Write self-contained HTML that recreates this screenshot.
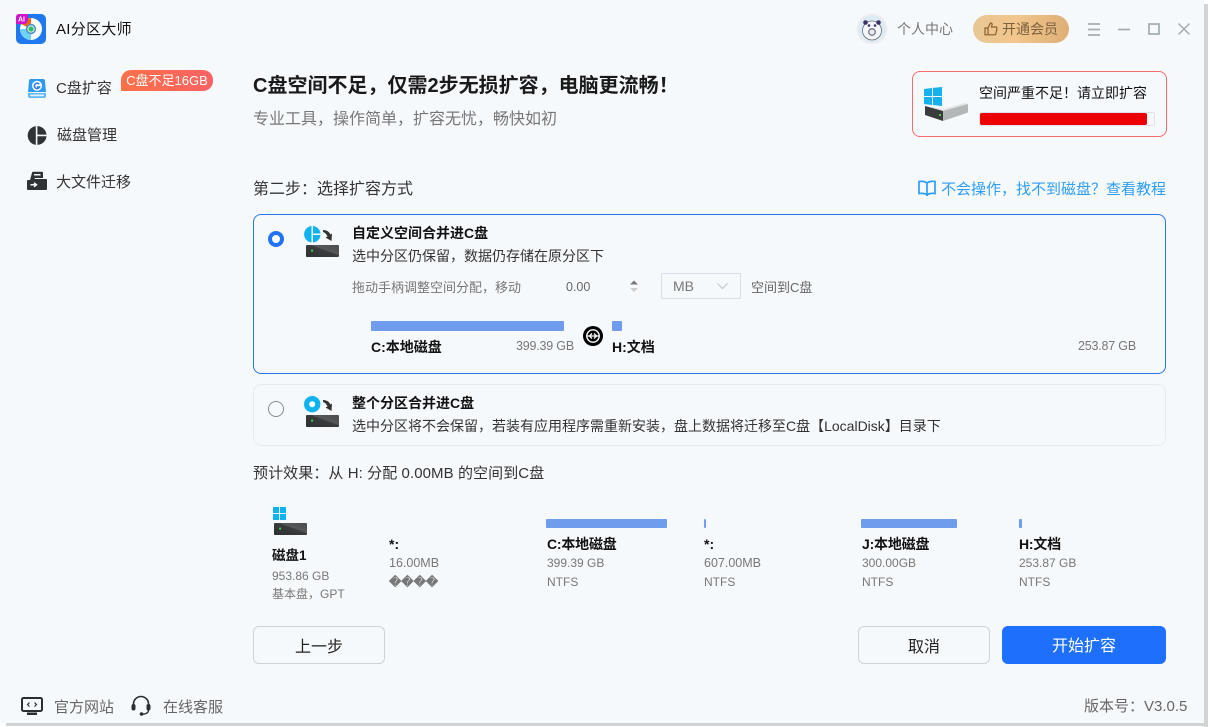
<!DOCTYPE html>
<html lang="zh"><head><meta charset="utf-8"><title>AI分区大师</title>
<style>
*{box-sizing:border-box;margin:0;padding:0}
html,body{width:1211px;height:727px;overflow:hidden;background:#fff}
body{position:relative;font-family:"Liberation Sans","Noto Sans CJK SC",sans-serif;color:#222}
#w{position:absolute;left:0;top:0;width:1204px;height:723px;background:#f6f9fb}
#sr{position:absolute;left:1204px;top:4px;width:4px;height:723px;background:#d2d4d4}
#sb{position:absolute;left:6px;top:723px;width:1202px;height:3px;background:#d2d4d4}
.t{position:absolute;white-space:nowrap;line-height:20px}
.b{font-weight:700;color:#111}
.g{color:#777}
svg{position:absolute;overflow:visible}
.bar{position:absolute;background:#6f9cec;border-radius:1px}
.btn{position:absolute;text-align:center;border-radius:6px;font-size:16px}
</style></head><body>
<div id="sr"></div><div id="sb"></div>
<div id="w">
<svg width="0" height="0" style="left:0;top:0"><defs>
<linearGradient id="dk" x1="0" y1="1" x2="1" y2="0"><stop offset="0" stop-color="#2c2e2f"/><stop offset=".55" stop-color="#3a3c3d"/><stop offset=".6" stop-color="#565859"/><stop offset="1" stop-color="#4a4c4d"/></linearGradient>
</defs></svg>
<!-- logo -->
<svg style="left:16px;top:14px" width="30" height="30" viewBox="0 0 30 30">
<rect width="30" height="30" rx="5" fill="#1f78ee"/>
<circle cx="15" cy="15" r="11" fill="#fff"/>
<path d="M15 15V4A11 11 0 0 0 5 10z" fill="#f2690d"/>
<path d="M15 15H4A11 11 0 0 0 15 26z" fill="#6fd3f6"/>
<circle cx="15" cy="15" r="5.200" fill="#4f8fc9"/><circle cx="15" cy="15" r="3.600" fill="#e9f5f2"/><circle cx="15" cy="15" r="2.600" fill="#2fbf63"/>
<path d="M0 10V3a3 3 0 0 1 3-3h9v6a4 4 0 0 1-4 4z" fill="#d014c8"/>
<text x="2" y="7.500" font-size="7" font-weight="700" fill="#fff" font-family="Liberation Sans">AI</text>
</svg>
<div class="t" style="left:56px;top:20px;font-size:15px;color:#111;letter-spacing:.3px">AI分区大师</div>

<!-- sidebar -->
<svg style="left:27px;top:79px" width="20" height="19" viewBox="0 0 20 19">
<path d="M4 0h12a2 2 0 0 1 2 2l1 11H1L2 2a2 2 0 0 1 2-2z" fill="#2f9bf0"/><path d="M1 14h18v3a2 2 0 0 1-2 2H3a2 2 0 0 1-2-2z" fill="#5fb8f5"/><rect x="3" y="15.500" width="14" height="1.800" rx=".8" fill="#e3f3fe"/>
<circle cx="10" cy="6.800" r="5" fill="#fff"/><path d="M12.200 5.200A2.700 2.700 0 1 0 12.500 8H10" fill="none" stroke="#2f7fe0" stroke-width="1.600"/>
</svg>
<div class="t" style="left:56px;top:79px;font-size:15px;color:#333">C盘扩容</div>
<div style="position:absolute;left:121px;top:70px;width:92px;height:21px;border-radius:10px 10px 10px 0;background:linear-gradient(90deg,#fb7148,#fb6263);color:#fff;font-size:13px;line-height:22px;text-align:center;white-space:nowrap">C盘不足16GB</div>
<svg style="left:27px;top:126px" width="20" height="19" viewBox="0 0 20 19">
<path d="M8.800 0.100V18.900A9.500 9.500 0 0 1 8.800 0.100z" fill="#2f3336"/><path d="M10.400 0.100A9.500 9.500 0 0 1 19.500 8.600H10.400z" fill="#2f3336"/><path d="M10.400 10.200H19.500A9.500 9.500 0 0 1 10.400 18.900z" fill="#2f3336"/>
</svg>
<div class="t" style="left:57px;top:126px;font-size:15px;color:#333">磁盘管理</div>
<svg style="left:27px;top:172px" width="20" height="18" viewBox="0 0 20 18">
<path d="M5 0.800a1 1 0 0 1 1-1h9a1 1 0 0 1 1 1V6H8L7 8H3z" fill="#2f3336"/><rect x="7" y="2" width="6.500" height="1.500" fill="#f6f9fb"/>
<path d="M1 8h5l1-1h12a1 1 0 0 1 1 1v9a1 1 0 0 1-1 1H1a1 1 0 0 1-1-1V9a1 1 0 0 1 1-1z" fill="#2f3336"/>
<path d="M3.500 12.800h5.500M7 10.800l2.500 2-2.500 2" stroke="#f6f9fb" stroke-width="1.500" fill="none"/>
</svg>
<div class="t" style="left:56px;top:173px;font-size:15px;color:#333">大文件迁移</div>

<!-- footer left -->
<svg style="left:21px;top:697px" width="23" height="19" viewBox="0 0 23 19">
<rect x="1" y="1" width="20" height="13" rx="1.500" fill="none" stroke="#2a2e31" stroke-width="2"/>
<path d="M6 18h10v-2.500H6z" fill="#2a2e31"/>
<path d="M8.500 5.500L6.500 7.500l2 2M13.500 5.500l2 2-2 2" stroke="#2a2e31" stroke-width="1.200" fill="none"/>
</svg>
<div class="t" style="left:54px;top:698px;font-size:15px;color:#666">官方网站</div>
<svg style="left:131px;top:696px" width="20" height="20" viewBox="0 0 20 20">
<path d="M2.500 10V8a7.500 7.500 0 0 1 15 0v2" fill="none" stroke="#2a2e31" stroke-width="1.600"/>
<rect x="0.500" y="8" width="4" height="6.500" rx="2" fill="#2a2e31"/><rect x="15.500" y="8" width="4" height="6.500" rx="2" fill="#2a2e31"/>
<path d="M17.500 14c0 3-2.500 4-6 4.200" fill="none" stroke="#2a2e31" stroke-width="1.300"/><circle cx="10.500" cy="18" r="1.800" fill="#2a2e31"/>
</svg>
<div class="t" style="left:163px;top:698px;font-size:15px;color:#666">在线客服</div>

<!-- top right -->
<svg style="left:856px;top:13px" width="32" height="32" viewBox="0 0 32 32">
<circle cx="16" cy="16" r="15.500" fill="#f5ecf3"/><circle cx="16" cy="16" r="14" fill="#dcecf3"/>
<circle cx="16" cy="17.500" r="9.500" fill="#f4f8fa" stroke="#6a6a78" stroke-width=".8"/>
<circle cx="9.500" cy="9.500" r="2.300" fill="#3c2f6c"/><circle cx="22.500" cy="9.500" r="2.300" fill="#3c2f6c"/>
<circle cx="13" cy="12.500" r="1.300" fill="#3c2f6c"/><circle cx="19" cy="12.500" r="1.300" fill="#3c2f6c"/>
<circle cx="16" cy="19" r="3.300" fill="#e9e8ef" stroke="#77778a" stroke-width="1.300"/>
</svg>
<div class="t" style="left:897px;top:19px;font-size:14px;color:#777">个人中心</div>
<div style="position:absolute;left:973px;top:15px;width:96px;height:28px;border-radius:14px;background:linear-gradient(90deg,#e8c795,#f2c68c 45%,#deae76)"></div>
<svg style="left:984px;top:22px" width="14" height="14" viewBox="0 0 14 14"><path d="M4 6L6.500 1c1.500 0 2 1 1.500 2L7.500 5H12a1 1 0 0 1 1 1.200L11.800 12a1 1 0 0 1-1 .8H4zM1 6h3v6.800H1z" fill="none" stroke="#8a5f2c" stroke-width="1.200"/></svg>
<div class="t" style="left:1002px;top:19px;font-size:14px;color:#7a6140">开通会员</div>
<svg style="left:1088px;top:23px" width="13" height="13" viewBox="0 0 13 13"><path d="M0 1h12M0 6.500h12M0 12h12" stroke="#a4acb0" stroke-width="1.700"/></svg>
<svg style="left:1118px;top:28px" width="13" height="3" viewBox="0 0 13 3"><path d="M0 1.500h12" stroke="#a4acb0" stroke-width="1.700"/></svg>
<svg style="left:1148px;top:23px" width="12" height="12" viewBox="0 0 12 12"><rect x="1" y="1" width="10" height="10" fill="none" stroke="#a4acb0" stroke-width="1.700"/></svg>
<svg style="left:1178px;top:23px" width="12" height="12" viewBox="0 0 12 12"><path d="M.5.500l11 11M11.500.500l-11 11" stroke="#a4acb0" stroke-width="1.500"/></svg>

<!-- headline -->
<div class="t b" style="left:253px;top:74px;font-size:20px;line-height:24px;color:#1a1a1a">C盘空间不足，仅需2步无损扩容，电脑更流畅！</div>
<div class="t" style="left:253px;top:110px;font-size:16px;color:#777">专业工具，操作简单，扩容无忧，畅快如初</div>

<!-- warn box -->
<div style="position:absolute;left:912px;top:71px;width:255px;height:66px;border:1px solid #f56a6a;border-radius:8px"></div>
<svg style="left:923px;top:87px" width="46" height="35" viewBox="0 0 46 35">
<path d="M1 2l8-1v8H1zM10 .9L19 0v9h-9zM1 10h8v8l-8-1zM10 10h9v9l-9-1z" fill="#13b2ee"/>
<path d="M2 19l18 5 25-7-3-1-22 6z" fill="#e3e4e4"/>
<path d="M20 24l25-7v8.500L20 34z" fill="#b4b7b8"/><path d="M2 19l18 5v10L2 28z" fill="#3a3c3c"/>
<rect x="16" y="27" width="2" height="2" fill="#3ccf4a"/>
</svg>
<div class="t" style="left:979px;top:83px;font-size:14px;color:#111">空间严重不足！请立即扩容</div>
<div style="position:absolute;left:979px;top:112px;width:176px;height:14px;border:1px solid #dde2ea;border-radius:2px;background:#f6f9fb"></div>
<div style="position:absolute;left:980px;top:113px;width:167px;height:12px;background:#ec0000;border-radius:2px"></div>

<!-- step -->
<div class="t" style="left:253px;top:180px;font-size:16px;color:#333">第二步：选择扩容方式</div>
<svg style="left:918px;top:180px" width="18" height="17" viewBox="0 0 18 17"><path d="M9 3C7.500 1.500 4 1 1 1.500V13.500c3-.5 6.500 0 8 1.500 1.500-1.500 5-2 8-1.500V1.500C14 1 10.500 1.500 9 3zM9 3v13" fill="none" stroke="#2e9df5" stroke-width="1.700"/></svg>
<div class="t" style="left:941px;top:180px;font-size:15px;color:#2e9df5">不会操作，找不到磁盘？查看教程</div>

<!-- card 1 -->
<div style="position:absolute;left:253px;top:214px;width:913px;height:160px;border:1px solid #2b74e8;border-radius:8px"></div>
<div style="position:absolute;left:268px;top:231px;width:16px;height:16px;border-radius:50%;border:4.500px solid #2173f5;background:#fff"></div>
<svg style="left:304px;top:226px" width="36" height="32" viewBox="0 0 36 32">
<path d="M7.500 0V16.500A8.300 8.300 0 0 1 7.500 0zM9 0A8.300 8.300 0 0 1 16.500 7.500H9zM9 9H16.500A8.300 8.300 0 0 1 9 16.500z" fill="#10b3ef"/>
<path d="M19 4c4 .3 6 1.500 7.500 4.500L28 7.500 27.500 15 21.500 11.500 23.500 10.500C22.500 8 21 6.500 19 6z" fill="#333"/>
<rect x="2" y="19" width="33" height="12" rx="1" fill="url(#dk)"/><rect x="7" y="23.500" width="2.200" height="2.200" rx="1" fill="#3ccf4a"/>
</svg>
<div class="t b" style="left:352px;top:223px;font-size:14px">自定义空间合并进C盘</div>
<div class="t" style="left:352px;top:246px;font-size:14px;color:#333">选中分区仍保留，数据仍存储在原分区下</div>
<div class="t g" style="left:352px;top:278px;font-size:13px">拖动手柄调整空间分配，移动</div>
<div class="t" style="left:566px;top:277px;font-size:12.500px;color:#666">0.00</div>
<svg style="left:629px;top:279px" width="10" height="14" viewBox="0 0 10 14"><path d="M1 5.500l4-4 4 4z" fill="#777"/><path d="M1 9l4 4 4-4z" fill="#ccc"/></svg>
<div style="position:absolute;left:661px;top:273px;width:80px;height:26px;border:1px solid #d8dee8;border-radius:2px"></div>
<div class="t" style="left:673px;top:276px;font-size:14px;color:#777">MB</div>
<svg style="left:717px;top:283px" width="11" height="7" viewBox="0 0 11 7"><path d="M.5.500l5 5 5-5" fill="none" stroke="#c5c9ce" stroke-width="1.200"/></svg>
<div class="t" style="left:751px;top:278px;font-size:13px;color:#666">空间到C盘</div>
<div class="bar" style="left:371px;top:321px;width:193px;height:10px"></div>
<div class="bar" style="left:612px;top:321px;width:10px;height:10px"></div>
<div class="t b" style="left:371px;top:337px;font-size:14px">C:本地磁盘</div>
<div class="t g" style="left:516px;top:336px;font-size:12.500px;letter-spacing:-.2px">399.39 GB</div>
<svg style="left:583px;top:326px" width="20" height="20" viewBox="0 0 20 20"><circle cx="10" cy="10" r="10" fill="#000"/><circle cx="10" cy="10" r="6.200" fill="none" stroke="#fff" stroke-width="1.400"/><path d="M4.500 10h11M6.500 10l2.500-2.500M6.500 10L9 12.500M13.500 10L11 7.500M13.500 10L11 12.500" fill="none" stroke="#fff" stroke-width="1.300"/></svg>
<div class="t b" style="left:612px;top:337px;font-size:14px">H:文档</div>
<div class="t g" style="left:1078px;top:336px;font-size:12.500px;letter-spacing:-.2px">253.87 GB</div>

<!-- card 2 -->
<div style="position:absolute;left:253px;top:384px;width:913px;height:62px;border:1px solid #e3edf1;border-radius:8px"></div>
<div style="position:absolute;left:268px;top:401px;width:16px;height:16px;border-radius:50%;border:1px solid #8a8a8a"></div>
<svg style="left:304px;top:396px" width="36" height="32" viewBox="0 0 36 32">
<circle cx="8.200" cy="8.200" r="8.200" fill="#10b3ef"/><circle cx="8.200" cy="8.200" r="3" fill="#fff"/>
<path d="M19 4c4 .3 6 1.500 7.500 4.500L28 7.500 27.500 15 21.500 11.500 23.500 10.500C22.500 8 21 6.500 19 6z" fill="#333"/>
<rect x="2" y="19" width="33" height="12" rx="1" fill="url(#dk)"/><rect x="7" y="23.500" width="2.200" height="2.200" rx="1" fill="#3ccf4a"/>
</svg>
<div class="t b" style="left:352px;top:393px;font-size:14px">整个分区合并进C盘</div>
<div class="t" style="left:352px;top:416px;font-size:14px;color:#333">选中分区将不会保留，若装有应用程序需重新安装，盘上数据将迁移至C盘【LocalDisk】目录下</div>

<!-- preview -->
<div class="t" style="left:253px;top:464px;font-size:15px;color:#333;letter-spacing:.08px">预计效果：从 H: 分配 0.00MB 的空间到C盘</div>
<svg style="left:273px;top:507px" width="36" height="30" viewBox="0 0 36 30">
<path d="M0 0h6v6H0zM7 0h6v6H7zM0 7h6v6H0zM7 7h6v6H7z" fill="#10b3ef"/>
<rect x="1" y="16" width="33" height="12" rx="1" fill="url(#dk)"/><rect x="6" y="20.500" width="2.200" height="2.200" rx="1" fill="#3ccf4a"/>
</svg>
<div class="t b" style="left:272px;top:546px;font-size:13.500px">磁盘1</div>
<div class="t g" style="left:272px;top:566px;font-size:12px">953.86 GB</div>
<div class="t g" style="left:272px;top:584px;font-size:12px">基本盘，GPT</div>

<div class="t b" style="left:389px;top:534px;font-size:14px">*:</div>
<div class="t g" style="left:389px;top:553px;font-size:12.500px">16.00MB</div>
<div class="t g" style="left:389px;top:572px;font-size:12px;font-weight:700">����</div>

<div class="bar" style="left:546px;top:519px;width:121px;height:9px"></div>
<div class="t b" style="left:547px;top:534px;font-size:14px;letter-spacing:-.2px">C:本地磁盘</div>
<div class="t g" style="left:547px;top:553px;font-size:12px">399.39 GB</div>
<div class="t g" style="left:547px;top:572px;font-size:12px">NTFS</div>

<div class="bar" style="left:704px;top:519px;width:2px;height:9px"></div>
<div class="t b" style="left:704px;top:534px;font-size:14px">*:</div>
<div class="t g" style="left:704px;top:553px;font-size:12.500px">607.00MB</div>
<div class="t g" style="left:704px;top:572px;font-size:12px">NTFS</div>

<div class="bar" style="left:861px;top:519px;width:96px;height:9px"></div>
<div class="t b" style="left:862px;top:534px;font-size:14px;letter-spacing:-.2px">J:本地磁盘</div>
<div class="t g" style="left:862px;top:553px;font-size:12px">300.00GB</div>
<div class="t g" style="left:862px;top:572px;font-size:12px">NTFS</div>

<div class="bar" style="left:1019px;top:519px;width:3px;height:9px"></div>
<div class="t b" style="left:1019px;top:534px;font-size:14px;letter-spacing:-.2px">H:文档</div>
<div class="t g" style="left:1019px;top:553px;font-size:12px">253.87 GB</div>
<div class="t g" style="left:1019px;top:572px;font-size:12px">NTFS</div>

<!-- buttons -->
<div class="btn" style="left:253px;top:626px;width:132px;height:38px;line-height:41px;border:1px solid #cfd3d6;color:#222">上一步</div>
<div class="btn" style="left:858px;top:626px;width:132px;height:38px;line-height:41px;border:1px solid #cfd3d6;color:#222">取消</div>
<div class="btn" style="left:1002px;top:626px;width:164px;height:38px;line-height:42px;background:#1e6ffb;color:#fff">开始扩容</div>
<div class="t" style="left:1084px;top:697px;font-size:15px;color:#666">版本号：V3.0.5</div>
</div>
</body></html>
